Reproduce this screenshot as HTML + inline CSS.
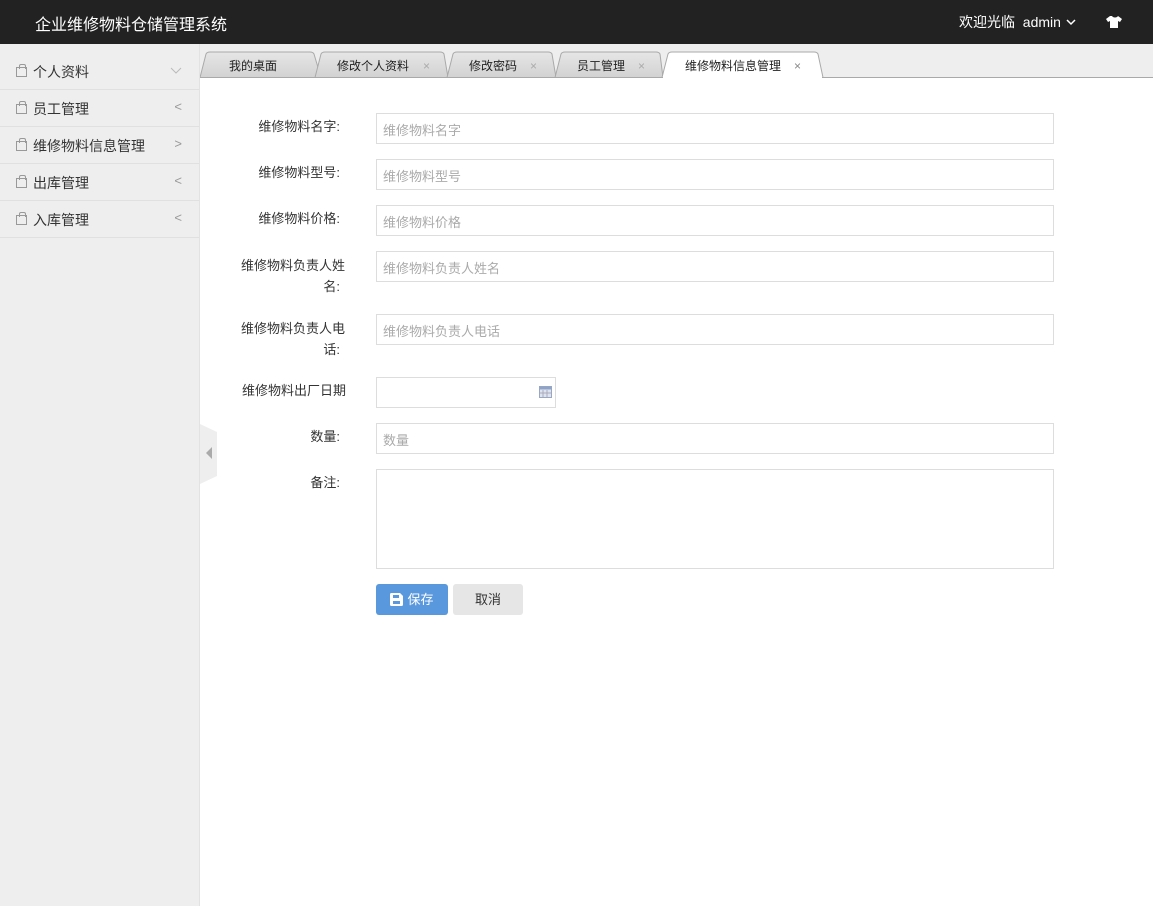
<!DOCTYPE html>
<html><head><meta charset="utf-8"><style>
*{margin:0;padding:0;box-sizing:border-box}
body{width:1153px;height:906px;overflow:hidden;font-family:"Liberation Sans","Noto Sans CJK SC",sans-serif;font-size:13px;color:#333;background:#fff;position:relative}
.top{position:absolute;left:0;top:0;width:1153px;height:44px;background:#222;color:#fff}
.title{position:absolute;left:35px;top:11px;font-size:16px}
.welcome{position:absolute;left:959px;top:12px;font-size:14px}
.side{position:absolute;left:0;top:44px;width:200px;height:862px;background:#eee;border-right:1px solid #e2e2e2;padding-top:9px}
.item{height:37px;border-bottom:1px solid #e0e0e0;position:relative;font-size:14px;color:#333}
.item span.t{position:absolute;left:33px;top:9px}
.item .arr{position:absolute;right:17px;top:9px;color:#999;font-size:13px}
.bag{position:absolute;left:16px;top:14px;width:11px;height:10px;border:1px solid #999}
.bag:before{content:"";position:absolute;left:2px;top:-4px;width:5px;height:4px;border:1px solid #999;border-bottom:none;border-radius:2px 2px 0 0}
.tabs{position:absolute;left:200px;top:44px;width:953px;height:34px;background:#eeeeef}
.lab{position:absolute;width:140px;text-align:right;left:200px;font-size:13px;color:#333;line-height:21px}
.inp{position:absolute;left:376px;width:678px;height:31px;border:1px solid #ddd;color:#aaa;font-size:13px;padding:6px 0 0 6px}
.btn{position:absolute;top:584px;height:31px;border-radius:3px;font-size:13px;text-align:center;line-height:31px}
</style></head><body>
<div class="top"><div class="title">企业维修物料仓储管理系统</div>
<div class="welcome">欢迎光临&nbsp; admin <svg width="12" height="10" viewBox="0 0 12 10"><path d="M2 3l4 4 4-4" stroke="#fff" stroke-width="1.5" fill="none"/></svg></div>
<svg style="position:absolute;left:1105px;top:15px" width="18" height="14" viewBox="0 0 18 14"><path d="M5 1L1 4l2 3 2-1v7h8V6l2 1 2-3-4-3c-1 2-5 2-6 0z" fill="#fff"/></svg>
</div>
<div class="side">
<div class="item"><i class="bag"></i><span class="t">个人资料</span><svg style="position:absolute;right:17px;top:14px" width="12" height="8"><path d="M1 1l5 5 5-5" stroke="#bbb" fill="none"/></svg></div>
<div class="item"><i class="bag"></i><span class="t">员工管理</span><span class="arr">&lt;</span></div>
<div class="item"><i class="bag"></i><span class="t">维修物料信息管理</span><span class="arr">&gt;</span></div>
<div class="item"><i class="bag"></i><span class="t">出库管理</span><span class="arr">&lt;</span></div>
<div class="item"><i class="bag"></i><span class="t">入库管理</span><span class="arr">&lt;</span></div>
</div>
<div class="tabs">
<svg width="953" height="34" style="position:absolute;left:0;top:0">
<defs><linearGradient id="g" x1="0" y1="0" x2="0" y2="1"><stop offset="0" stop-color="#e6e6e6"/><stop offset="1" stop-color="#d2d2d2"/></linearGradient></defs>
<g stroke="#a9a9a9" fill="url(#g)">
<path d="M0 33.5L6 10Q7 8 10 8H110Q113 8 114 10L121 33.5"/>
<path d="M115 33.5L121 10Q122 8 125 8H240Q243 8 244 10L248 33.5"/>
<path d="M247 33.5L253 10Q254 8 257 8H348Q351 8 352 10L356 33.5"/>
<path d="M355 33.5L361 10Q362 8 365 8H456Q459 8 460 10L463 33.5"/>
</g>
<path d="M462 33.5L468 10Q469 8 472 8H614Q617 8 618 10L623 33.5" stroke="#a9a9a9" fill="#fff"/>
<path d="M0 33.5H953" stroke="#a9a9a9"/>
<path d="M463 33.5H622" stroke="#fff" stroke-width="1.5"/>
<g font-family="Liberation Sans,Noto Sans CJK SC,sans-serif" font-size="12" fill="#222">
<text x="29" y="26">我的桌面</text>
<text x="137" y="26">修改个人资料</text><text x="223" y="26" fill="#aaa">×</text>
<text x="269" y="26">修改密码</text><text x="330" y="26" fill="#aaa">×</text>
<text x="377" y="26">员工管理</text><text x="438" y="26" fill="#aaa">×</text>
<text x="485" y="26">维修物料信息管理</text><text x="594" y="26" fill="#888">×</text>
</g></svg>
</div>
<svg style="position:absolute;left:200px;top:424px" width="18" height="60"><path d="M0 0L17 8V52L0 60z" fill="#eee"/><path d="M12 23L6 29l6 6z" fill="#aaa"/></svg>

<div class="lab" style="top:116px">维修物料名字:</div><div class="inp" style="top:113px">维修物料名字</div>
<div class="lab" style="top:162px">维修物料型号:</div><div class="inp" style="top:159px">维修物料型号</div>
<div class="lab" style="top:208px">维修物料价格:</div><div class="inp" style="top:205px">维修物料价格</div>
<div class="lab" style="top:255px;left:200px;width:145px">维修物料负责人姓<br><span style="margin-right:5px">名:</span></div><div class="inp" style="top:251px">维修物料负责人姓名</div>
<div class="lab" style="top:318px;left:200px;width:145px">维修物料负责人电<br><span style="margin-right:5px">话:</span></div><div class="inp" style="top:314px">维修物料负责人电话</div>
<div class="lab" style="top:380px;left:190px;width:156px">维修物料出厂日期</div><div class="inp" style="top:377px;width:180px"><svg style="position:absolute;right:3px;top:8px" width="13" height="12"><rect x="0.5" y="0.5" width="12" height="11" fill="#dde4f0" stroke="#99a8c0"/><rect x="0.5" y="0.5" width="12" height="3" fill="#8fa3c8"/><path d="M4 4v7M8 4v7M1 7h11" stroke="#aab"/></svg></div>
<div class="lab" style="top:426px">数量:</div><div class="inp" style="top:423px">数量</div>
<div class="lab" style="top:472px">备注:</div><div class="inp" style="top:469px;height:100px"></div>
<div class="btn" style="left:376px;width:72px;background:#5a98de;color:#fff"><svg width="13" height="13" style="vertical-align:-2px;margin-right:4px"><path d="M0 1.5Q0 0 1.5 0H10L13 3V11.5Q13 13 11.5 13H1.5Q0 13 0 11.5z" fill="#fff"/><rect x="3" y="2" width="6" height="3" fill="#5a98de"/><rect x="3" y="8" width="7" height="3" fill="#5a98de"/></svg>保存</div>
<div class="btn" style="left:453px;width:70px;background:#e6e6e6;color:#333">取消</div>
</body></html>
